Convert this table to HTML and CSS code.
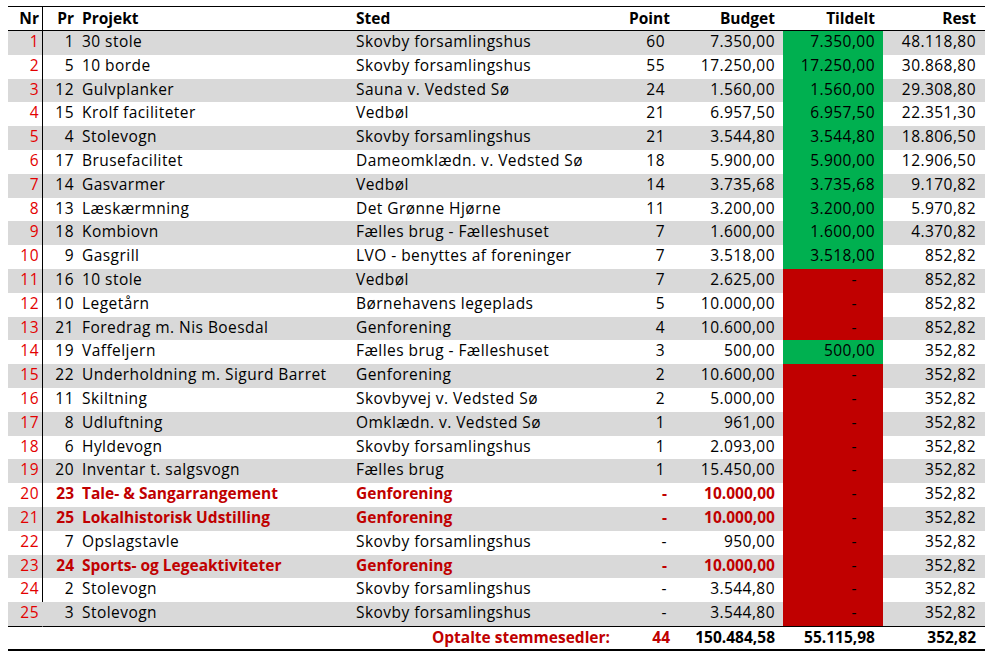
FILE: index.html
```html
<!DOCTYPE html>
<html lang="da">
<head>
<meta charset="utf-8">
<title>Projekter</title>
<link rel="stylesheet" href="styles.css">
</head>
<body>
<table class="sheet">
  <colgroup>
    <col class="c-nr"><col class="c-pr"><col class="c-proj"><col class="c-sted"><col class="c-point"><col class="c-budget"><col class="c-tildelt"><col class="c-rest">
  </colgroup>
  <thead>
    <tr class="head">
      <th class="nr">Nr</th><th class="pr">Pr</th><th class="proj">Projekt</th><th class="sted">Sted</th><th class="point">Point</th><th class="num">Budget</th><th class="num">Tildelt</th><th class="rest">Rest</th>
    </tr>
  </thead>
  <tbody>
    <tr class="odd"><td class="nr">1</td><td class="pr">1</td><td class="proj">30 stole</td><td class="sted">Skovby forsamlingshus</td><td class="point">60</td><td class="num">7.350,00</td><td class="num ok">7.350,00</td><td class="rest">48.118,80</td></tr>
    <tr><td class="nr">2</td><td class="pr">5</td><td class="proj">10 borde</td><td class="sted">Skovby forsamlingshus</td><td class="point">55</td><td class="num">17.250,00</td><td class="num ok">17.250,00</td><td class="rest">30.868,80</td></tr>
    <tr class="odd"><td class="nr">3</td><td class="pr">12</td><td class="proj">Gulvplanker</td><td class="sted">Sauna v. Vedsted Sø</td><td class="point">24</td><td class="num">1.560,00</td><td class="num ok">1.560,00</td><td class="rest">29.308,80</td></tr>
    <tr><td class="nr">4</td><td class="pr">15</td><td class="proj">Krolf faciliteter</td><td class="sted">Vedbøl</td><td class="point">21</td><td class="num">6.957,50</td><td class="num ok">6.957,50</td><td class="rest">22.351,30</td></tr>
    <tr class="odd"><td class="nr">5</td><td class="pr">4</td><td class="proj">Stolevogn</td><td class="sted">Skovby forsamlingshus</td><td class="point">21</td><td class="num">3.544,80</td><td class="num ok">3.544,80</td><td class="rest">18.806,50</td></tr>
    <tr><td class="nr">6</td><td class="pr">17</td><td class="proj">Brusefacilitet</td><td class="sted">Dameomklædn. v. Vedsted Sø</td><td class="point">18</td><td class="num">5.900,00</td><td class="num ok">5.900,00</td><td class="rest">12.906,50</td></tr>
    <tr class="odd"><td class="nr">7</td><td class="pr">14</td><td class="proj">Gasvarmer</td><td class="sted">Vedbøl</td><td class="point">14</td><td class="num">3.735,68</td><td class="num ok">3.735,68</td><td class="rest">9.170,82</td></tr>
    <tr><td class="nr">8</td><td class="pr">13</td><td class="proj">Læskærmning</td><td class="sted">Det Grønne Hjørne</td><td class="point">11</td><td class="num">3.200,00</td><td class="num ok">3.200,00</td><td class="rest">5.970,82</td></tr>
    <tr class="odd"><td class="nr">9</td><td class="pr">18</td><td class="proj">Kombiovn</td><td class="sted">Fælles brug - Fælleshuset</td><td class="point">7</td><td class="num">1.600,00</td><td class="num ok">1.600,00</td><td class="rest">4.370,82</td></tr>
    <tr><td class="nr">10</td><td class="pr">9</td><td class="proj">Gasgrill</td><td class="sted">LVO - benyttes af foreninger</td><td class="point">7</td><td class="num">3.518,00</td><td class="num ok">3.518,00</td><td class="rest">852,82</td></tr>
    <tr class="odd"><td class="nr">11</td><td class="pr">16</td><td class="proj">10 stole</td><td class="sted">Vedbøl</td><td class="point">7</td><td class="num">2.625,00</td><td class="num no">-</td><td class="rest">852,82</td></tr>
    <tr><td class="nr">12</td><td class="pr">10</td><td class="proj">Legetårn</td><td class="sted">Børnehavens legeplads</td><td class="point">5</td><td class="num">10.000,00</td><td class="num no">-</td><td class="rest">852,82</td></tr>
    <tr class="odd"><td class="nr">13</td><td class="pr">21</td><td class="proj">Foredrag m. Nis Boesdal</td><td class="sted">Genforening</td><td class="point">4</td><td class="num">10.600,00</td><td class="num no">-</td><td class="rest">852,82</td></tr>
    <tr><td class="nr">14</td><td class="pr">19</td><td class="proj">Vaffeljern</td><td class="sted">Fælles brug - Fælleshuset</td><td class="point">3</td><td class="num">500,00</td><td class="num ok">500,00</td><td class="rest">352,82</td></tr>
    <tr class="odd"><td class="nr">15</td><td class="pr">22</td><td class="proj">Underholdning m. Sigurd Barret</td><td class="sted">Genforening</td><td class="point">2</td><td class="num">10.600,00</td><td class="num no">-</td><td class="rest">352,82</td></tr>
    <tr><td class="nr">16</td><td class="pr">11</td><td class="proj">Skiltning</td><td class="sted">Skovbyvej v. Vedsted Sø</td><td class="point">2</td><td class="num">5.000,00</td><td class="num no">-</td><td class="rest">352,82</td></tr>
    <tr class="odd"><td class="nr">17</td><td class="pr">8</td><td class="proj">Udluftning</td><td class="sted">Omklædn. v. Vedsted Sø</td><td class="point">1</td><td class="num">961,00</td><td class="num no">-</td><td class="rest">352,82</td></tr>
    <tr><td class="nr">18</td><td class="pr">6</td><td class="proj">Hyldevogn</td><td class="sted">Skovby forsamlingshus</td><td class="point">1</td><td class="num">2.093,00</td><td class="num no">-</td><td class="rest">352,82</td></tr>
    <tr class="odd"><td class="nr">19</td><td class="pr">20</td><td class="proj">Inventar t. salgsvogn</td><td class="sted">Fælles brug</td><td class="point">1</td><td class="num">15.450,00</td><td class="num no">-</td><td class="rest">352,82</td></tr>
    <tr class="hl"><td class="nr">20</td><td class="pr">23</td><td class="proj">Tale- &amp; Sangarrangement</td><td class="sted">Genforening</td><td class="point dash">-</td><td class="num">10.000,00</td><td class="num no">-</td><td class="rest">352,82</td></tr>
    <tr class="odd hl"><td class="nr">21</td><td class="pr">25</td><td class="proj">Lokalhistorisk Udstilling</td><td class="sted">Genforening</td><td class="point dash">-</td><td class="num">10.000,00</td><td class="num no">-</td><td class="rest">352,82</td></tr>
    <tr><td class="nr">22</td><td class="pr">7</td><td class="proj">Opslagstavle</td><td class="sted">Skovby forsamlingshus</td><td class="point dash">-</td><td class="num">950,00</td><td class="num no">-</td><td class="rest">352,82</td></tr>
    <tr class="odd hl"><td class="nr">23</td><td class="pr">24</td><td class="proj">Sports- og Legeaktiviteter</td><td class="sted">Genforening</td><td class="point dash">-</td><td class="num">10.000,00</td><td class="num no">-</td><td class="rest">352,82</td></tr>
    <tr><td class="nr">24</td><td class="pr">2</td><td class="proj">Stolevogn</td><td class="sted">Skovby forsamlingshus</td><td class="point dash">-</td><td class="num">3.544,80</td><td class="num no">-</td><td class="rest">352,82</td></tr>
    <tr class="odd last"><td class="nr">25</td><td class="pr">3</td><td class="proj">Stolevogn</td><td class="sted">Skovby forsamlingshus</td><td class="point dash">-</td><td class="num">3.544,80</td><td class="num no">-</td><td class="rest">352,82</td></tr>
  </tbody>
  <tfoot>
    <tr class="total">
      <td></td><td class="label" colspan="3">Optalte stemmesedler:</td><td class="point">44</td><td class="num">150.484,58</td><td class="num">55.115,98</td><td class="rest">352,82</td>
    </tr>
  </tfoot>
</table>
</body>
</html>
```

FILE: styles.css
```css
html, body {
  background: #ffffff;
}

body {
  margin: 6px 0 0 8px;
  font-family: "Open Sans", Lato, "Liberation Sans", sans-serif;
  font-size: 15.5px;
  color: #000000;
}

.sheet {
  table-layout: fixed;
  border-collapse: separate;
  border-spacing: 0;
  width: 977px;
}

.c-nr { width: 35px; }
.c-pr { width: 35px; }
.c-proj { width: 274px; }
.c-sted { width: 264px; }
.c-point { width: 62px; }
.c-budget { width: 105px; }
.c-tildelt { width: 100px; }
.c-rest { width: 102px; }

.sheet th,
.sheet td {
  padding: 0;
  white-space: nowrap;
  overflow: hidden;
  box-sizing: border-box;
}

.sheet td {
  letter-spacing: 0.45px;
}

.sheet th {
  font-weight: 700;
  height: 25px;
  line-height: 22px;
  padding-bottom: 1px;
  vertical-align: bottom;
  border-top: 1px solid #000;
  border-bottom: 1px solid #000;
}

.sheet tbody td {
  height: 23.8px;
  line-height: 20.8px;
  padding-bottom: 3px;
  vertical-align: bottom;
}

.sheet tbody tr.odd td {
  background: #d9d9d9;
}

.sheet .nr {
  text-align: right;
  padding-right: 3px;
  border-right: 1px solid #000;
}

.sheet tbody td.nr {
  color: #e30000;
}

.sheet tbody tr.last td.nr {
  border-right-color: transparent;
}

.sheet .pr {
  text-align: right;
  padding-right: 4px;
}

.sheet .proj,
.sheet .sted {
  text-align: left;
  padding-left: 4px;
}

.sheet .point {
  text-align: right;
  padding-right: 8px;
}

.sheet tbody td.point {
  padding-right: 13px;
}

.sheet tbody td.point.dash {
  padding-right: 11px;
}

.sheet .num {
  text-align: right;
  padding-right: 8px;
}

.sheet .rest {
  text-align: right;
  padding-right: 9px;
}

.sheet tbody tr td.ok {
  background: #00b050;
}

.sheet tbody tr td.no {
  background: #c00000;
  padding-right: 26px;
}

.sheet tr.hl td.pr,
.sheet tr.hl td.proj,
.sheet tr.hl td.sted,
.sheet tr.hl td.point,
.sheet tr.hl td:nth-child(6) {
  color: #c00000;
  font-weight: 700;
  letter-spacing: 0;
}

.sheet tbody tr.last td {
  border-bottom: 1px solid #000;
  height: 24.8px;
}

.sheet tfoot td {
  font-weight: 700;
  letter-spacing: 0;
  height: 24px;
  line-height: 21px;
  padding-bottom: 1px;
  vertical-align: bottom;
  overflow: visible;
  border-bottom: 2px solid #000;
}

.sheet tfoot td.label {
  text-align: right;
  padding-right: 6px;
  color: #c00000;
}

.sheet tfoot td.point {
  color: #c00000;
}
```
